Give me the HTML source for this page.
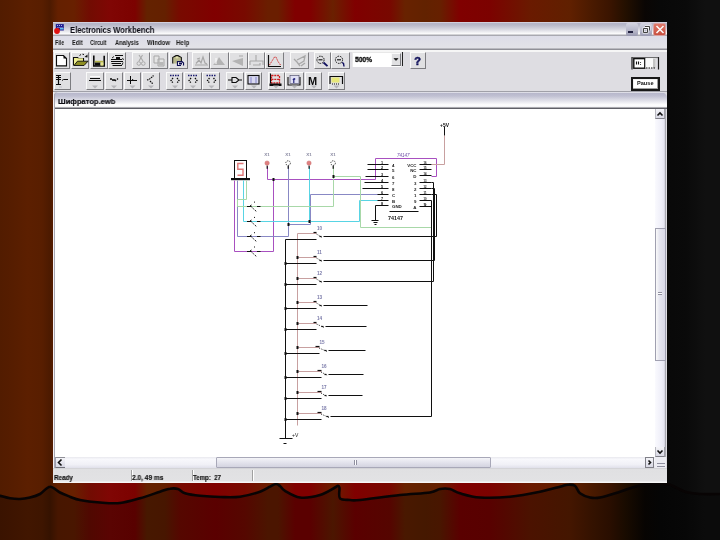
<!DOCTYPE html><html><head><meta charset="utf-8"><style>
*{margin:0;padding:0;box-sizing:border-box}
html,body{width:720px;height:540px;overflow:hidden}
body{position:relative;font-family:"Liberation Sans",sans-serif;background:linear-gradient(90deg,#521c00 0.00%, #561d00 1.67%, #5c1f00 3.89%, #581e00 5.83%, #4c1a00 6.94%, #642000 8.06%, #682000 10.28%, #720c02 12.50%, #800604 15.28%, #7c0200 18.75%, #642200 20.42%, #642000 22.92%, #780a00 25.00%, #800000 29.86%, #780a00 34.03%, #6a1e00 37.22%, #6a1e00 38.61%, #800000 40.97%, #800000 43.06%, #6a2000 46.25%, #800000 49.31%, #780800 54.17%, #682200 56.25%, #622200 59.03%, #662000 61.11%, #800000 63.89%, #7c0200 68.06%, #6a1a00 73.61%, #602000 79.17%, #4a1a00 82.22%, #3a1400 84.72%, #241000 86.81%, #0a0604 89.58%, #080808 91.67%, #0a0a0a 95.28%, #101010 97.92%, #101010 100.00%)}
.a{position:absolute}
.b{position:absolute;background:#e0e0e2;border-top:1px solid #fafafa;border-left:1px solid #fafafa;border-right:1px solid #7c7c80;border-bottom:1px solid #7c7c80}
.t{position:absolute;font-size:7px;line-height:7px;color:#111;white-space:nowrap;will-change:transform}
svg{position:absolute;left:0;top:0}

</style></head><body>
<svg width="720" height="540" viewBox="0 0 720 540">
<defs><linearGradient id="lg" x1="0" y1="0" x2="720" y2="0" gradientUnits="userSpaceOnUse">
<stop offset="0.0000" stop-color="#3a1300"/>
<stop offset="0.0167" stop-color="#3d1400"/>
<stop offset="0.0389" stop-color="#411600"/>
<stop offset="0.0583" stop-color="#3e1500"/>
<stop offset="0.0694" stop-color="#351200"/>
<stop offset="0.0806" stop-color="#471600"/>
<stop offset="0.1028" stop-color="#491600"/>
<stop offset="0.1250" stop-color="#500801"/>
<stop offset="0.1528" stop-color="#5a0402"/>
<stop offset="0.1875" stop-color="#580100"/>
<stop offset="0.2042" stop-color="#471800"/>
<stop offset="0.2292" stop-color="#471600"/>
<stop offset="0.2500" stop-color="#550700"/>
<stop offset="0.2986" stop-color="#5a0000"/>
<stop offset="0.3403" stop-color="#550700"/>
<stop offset="0.3722" stop-color="#4b1500"/>
<stop offset="0.3861" stop-color="#4b1500"/>
<stop offset="0.4097" stop-color="#5a0000"/>
<stop offset="0.4306" stop-color="#5a0000"/>
<stop offset="0.4625" stop-color="#4b1600"/>
<stop offset="0.4931" stop-color="#5a0000"/>
<stop offset="0.5417" stop-color="#550500"/>
<stop offset="0.5625" stop-color="#491800"/>
<stop offset="0.5903" stop-color="#451800"/>
<stop offset="0.6111" stop-color="#481600"/>
<stop offset="0.6389" stop-color="#5a0000"/>
<stop offset="0.6806" stop-color="#580100"/>
<stop offset="0.7361" stop-color="#4b1200"/>
<stop offset="0.7917" stop-color="#441600"/>
<stop offset="0.8222" stop-color="#341200"/>
<stop offset="0.8472" stop-color="#290e00"/>
<stop offset="0.8681" stop-color="#190b00"/>
<stop offset="0.8958" stop-color="#070402"/>
<stop offset="0.9167" stop-color="#050505"/>
<stop offset="0.9528" stop-color="#070707"/>
<stop offset="0.9792" stop-color="#0b0b0b"/>
<stop offset="1.0000" stop-color="#0b0b0b"/>
</linearGradient></defs>
<path d="M-5,495 C-4.2,495.1 -2.5,495.2 0,495.8 C2.5,496.4 6.7,497.8 10,498.3 C13.3,498.8 16.7,499.1 20,499 C23.3,498.9 26.7,498.3 30,497.5 C33.3,496.7 36.7,495.8 40,494 C43.3,492.2 46.7,486.9 50,486.7 C53.3,486.4 56.7,490.8 60,492.5 C63.3,494.2 66.7,495.4 70,496.7 C73.3,497.9 75.0,499.0 80,500 C85.0,501.0 93.3,502.0 100,502.5 C106.7,503.0 113.3,503.7 120,503 C126.7,502.3 133.3,500.2 140,498.3 C146.7,496.4 155.0,493.3 160,491.7 C165.0,490.1 167.0,489.1 170,488.7 C173.0,488.2 175.5,488.2 178,489 C180.5,489.8 181.3,492.2 185,493.3 C188.7,494.4 194.2,495.2 200,495.8 C205.8,496.4 213.3,496.9 220,497 C226.7,497.1 233.3,497.6 240,496.7 C246.7,495.8 255.0,493.4 260,491.7 C265.0,490.0 267.3,488.0 270,486.7 C272.7,485.4 274.3,484.1 276,484 C277.7,483.9 278.5,484.9 280,486 C281.5,487.1 281.7,488.9 285,490.8 C288.3,492.7 294.2,496.8 300,497.5 C305.8,498.2 314.2,496.7 320,495 C325.8,493.3 332.0,489.0 335,487.5 C338.0,486.0 337.2,485.7 338,485.8 C338.8,485.9 339.2,485.9 339.5,488 C339.8,490.1 338.2,496.3 340,498.3 C341.8,500.3 346.7,499.7 350,500 C353.3,500.3 351.7,500.8 360,500 C368.3,499.2 388.3,496.2 400,495 C411.7,493.8 423.3,493.5 430,492.5 C436.7,491.5 436.7,489.6 440,489 C443.3,488.4 446.7,488.3 450,489 C453.3,489.7 455.0,491.9 460,493.3 C465.0,494.7 471.7,496.9 480,497.5 C488.3,498.1 500.0,497.7 510,496.7 C520.0,495.7 531.7,493.4 540,491.7 C548.3,490.0 555.3,487.9 560,486.7 C564.7,485.5 565.5,484.8 568,484.7 C570.5,484.6 573.0,484.4 575,485.8 C577.0,487.2 577.5,491.4 580,493.3 C582.5,495.2 586.7,496.8 590,497.5 C593.3,498.2 595.0,498.5 600,497.5 C605.0,496.5 614.2,493.5 620,491.7 C625.8,489.9 630.3,487.9 635,486.7 C639.7,485.5 642.7,484.9 648,484.5 C653.3,484.1 662.3,483.5 667,484 C671.7,484.5 672.8,486.2 676,487.5 C679.2,488.8 682.0,490.9 686,492 C690.0,493.1 693.5,493.7 700,494 C706.5,494.3 720.8,494.0 725,494 L725,545 L-5,545 Z" fill="url(#lg)"/>
<path d="M-5,495 C-4.2,495.1 -2.5,495.2 0,495.8 C2.5,496.4 6.7,497.8 10,498.3 C13.3,498.8 16.7,499.1 20,499 C23.3,498.9 26.7,498.3 30,497.5 C33.3,496.7 36.7,495.8 40,494 C43.3,492.2 46.7,486.9 50,486.7 C53.3,486.4 56.7,490.8 60,492.5 C63.3,494.2 66.7,495.4 70,496.7 C73.3,497.9 75.0,499.0 80,500 C85.0,501.0 93.3,502.0 100,502.5 C106.7,503.0 113.3,503.7 120,503 C126.7,502.3 133.3,500.2 140,498.3 C146.7,496.4 155.0,493.3 160,491.7 C165.0,490.1 167.0,489.1 170,488.7 C173.0,488.2 175.5,488.2 178,489 C180.5,489.8 181.3,492.2 185,493.3 C188.7,494.4 194.2,495.2 200,495.8 C205.8,496.4 213.3,496.9 220,497 C226.7,497.1 233.3,497.6 240,496.7 C246.7,495.8 255.0,493.4 260,491.7 C265.0,490.0 267.3,488.0 270,486.7 C272.7,485.4 274.3,484.1 276,484 C277.7,483.9 278.5,484.9 280,486 C281.5,487.1 281.7,488.9 285,490.8 C288.3,492.7 294.2,496.8 300,497.5 C305.8,498.2 314.2,496.7 320,495 C325.8,493.3 332.0,489.0 335,487.5 C338.0,486.0 337.2,485.7 338,485.8 C338.8,485.9 339.2,485.9 339.5,488 C339.8,490.1 338.2,496.3 340,498.3 C341.8,500.3 346.7,499.7 350,500 C353.3,500.3 351.7,500.8 360,500 C368.3,499.2 388.3,496.2 400,495 C411.7,493.8 423.3,493.5 430,492.5 C436.7,491.5 436.7,489.6 440,489 C443.3,488.4 446.7,488.3 450,489 C453.3,489.7 455.0,491.9 460,493.3 C465.0,494.7 471.7,496.9 480,497.5 C488.3,498.1 500.0,497.7 510,496.7 C520.0,495.7 531.7,493.4 540,491.7 C548.3,490.0 555.3,487.9 560,486.7 C564.7,485.5 565.5,484.8 568,484.7 C570.5,484.6 573.0,484.4 575,485.8 C577.0,487.2 577.5,491.4 580,493.3 C582.5,495.2 586.7,496.8 590,497.5 C593.3,498.2 595.0,498.5 600,497.5 C605.0,496.5 614.2,493.5 620,491.7 C625.8,489.9 630.3,487.9 635,486.7 C639.7,485.5 642.7,484.9 648,484.5 C653.3,484.1 662.3,483.5 667,484 C671.7,484.5 672.8,486.2 676,487.5 C679.2,488.8 682.0,490.9 686,492 C690.0,493.1 693.5,493.7 700,494 C706.5,494.3 720.8,494.0 725,494" fill="none" stroke="#080404" stroke-width="2.6" stroke-linejoin="round"/>
</svg>
<div class="a" style="left:53px;top:22px;width:614px;height:461px;background:#dedde2"></div>
<div class="a" style="left:53px;top:22px;width:614px;height:14px;background:linear-gradient(180deg,#f0eaf0 0px,#b4b4c8 1px,#b8b8c8 3px,#d4d4de 7px,#f6f6f8 11px,#fcfcfc 12px,#a8a8b0 13px)"></div>
<div class="a" style="left:53px;top:36px;width:614px;height:14px;background:linear-gradient(180deg,#dcdce8,#e2e2e8 12px,#909098 13px)"></div>
<div class="a" style="left:53px;top:50px;width:614px;height:2px;background:#f6f6f6"></div>
<div class="a" style="left:53px;top:91px;width:614px;height:1px;background:#a0a0a8"></div>
<div class="a" style="left:54px;top:92px;width:613px;height:17px;border-radius:4px 6px 0 0;border-left:1px solid #a8a8b4;background:linear-gradient(180deg,#f0f0f4 0px,#b8b8cc 1.5px,#c0c0d2 4px,#dcdce6 8px,#ffffff 13px,#f4f4f6 15px,#606068 16px)"></div>
<div class="a" style="left:55px;top:109px;width:600px;height:348px;background:#fff"></div>
<div class="a" style="left:53px;top:92px;width:1px;height:377px;background:#f4f0f4"></div>
<div class="a" style="left:54px;top:94px;width:1px;height:375px;background:#a8a8b4"></div>
<div class="a" style="left:655px;top:109px;width:11px;height:348px;background:linear-gradient(90deg,#fafafe,#eeeef8 60%,#e4e4f0 85%,#a8a8b0 92%)"></div>
<div class="a" style="left:655px;top:109px;width:10px;height:10px;background:linear-gradient(180deg,#f4f4f8,#d8d8e4);border-left:1px solid #b8b8c0;border-bottom:1px solid #808088;border-right:1px solid #a0a0a8"></div>
<div class="a" style="left:655px;top:228px;width:11px;height:133px;background:linear-gradient(90deg,#fafafa,#e4e4ee 40%,#d8d8e6);border:1px solid #a0a0b0"></div>
<div class="a" style="left:658px;top:292px;width:4px;height:3px;background:#fff;border-top:1px solid #9090a0;border-bottom:1px solid #9090a0"></div>
<div class="a" style="left:655px;top:447px;width:10px;height:10px;background:linear-gradient(180deg,#f4f4f8,#d8d8e4);border-left:1px solid #b8b8c0;border-bottom:1px solid #808088;border-right:1px solid #a0a0a8"></div>
<div class="a" style="left:55px;top:457px;width:600px;height:11px;background:linear-gradient(180deg,#e8e8ee,#f8f8fc 20%,#f0f0f6 70%,#e0e0ea)"></div>
<div class="a" style="left:55px;top:457px;width:10px;height:11px;background:linear-gradient(180deg,#f4f4f8,#d8d8e4);border-left:1px solid #a0a0b0;border-bottom:1px solid #707078;border-top:1px solid #909098"></div>
<div class="a" style="left:216px;top:457px;width:275px;height:11px;background:linear-gradient(180deg,#f4f4f8,#e0e0ea 60%,#d4d4e0);border:1px solid #a8a8b8;border-radius:1px"></div>
<div class="a" style="left:354px;top:460px;width:3px;height:5px;background:#fff;border-left:1px solid #9090a0;border-right:1px solid #9090a0"></div>
<div class="a" style="left:645px;top:457px;width:9px;height:11px;background:linear-gradient(180deg,#f4f4f8,#d8d8e4);border:1px solid #808088"></div>
<div class="a" style="left:655px;top:457px;width:11px;height:11px;background:#ececf2"></div>
<svg width="720" height="540"><path d="M61.5,459.5 L58.5,462.5 L61.5,465.5" fill="none" stroke="#101010" stroke-width="1.6"/><path d="M648.5,460.5 L650.5,462.5 L648.5,464.5" fill="none" stroke="#101010" stroke-width="1.6"/><path d="M657.5,115.5 L660,113 L662.5,115.5" fill="none" stroke="#101010" stroke-width="1.6"/><path d="M657.5,450.5 L660,453 L662.5,450.5" fill="none" stroke="#101010" stroke-width="1.6"/><path d="M657,463.5 L665,463.5 M657,466.5 L665,466.5" stroke="#9090a0" stroke-width="1"/></svg>
<div class="a" style="left:53px;top:468px;width:614px;height:15px;background:linear-gradient(180deg,#c8c8cc 0px,#e0e0e2 1px,#e2e2e4 13px,#f6f6f6 14px)"></div>
<div class="a" style="left:131px;top:470px;width:2px;height:11px;background:linear-gradient(90deg,#a0a0a0 50%,#fff 50%)"></div>
<div class="a" style="left:192px;top:470px;width:2px;height:11px;background:linear-gradient(90deg,#a0a0a0 50%,#fff 50%)"></div>
<div class="a" style="left:252px;top:470px;width:2px;height:11px;background:linear-gradient(90deg,#a0a0a0 50%,#fff 50%)"></div>
<div class="t" style="left:53.5px;top:474px;font-size:7px;line-height:7px;font-weight:bold;color:#101010;transform:scaleX(0.904);transform-origin:0 0;-webkit-text-stroke:0.12px #000;">Ready</div>
<div class="t" style="left:132px;top:474px;font-size:7px;line-height:7px;font-weight:bold;color:#101010;transform:scaleX(0.941);transform-origin:0 0;-webkit-text-stroke:0.12px #000;">2.0, 49 ms</div>
<div class="t" style="left:193px;top:474px;font-size:7px;line-height:7px;font-weight:bold;color:#101010;transform:scaleX(0.871);transform-origin:0 0;-webkit-text-stroke:0.12px #000;">Temp:&nbsp; 27</div>
<div class="t" style="left:69.5px;top:25.5px;font-size:9.2px;line-height:9.2px;font-weight:bold;color:#101018;transform:scaleX(0.828);transform-origin:0 0;">Electronics Workbench</div>
<div class="t" style="left:54.900000000000006px;top:39px;font-size:7px;line-height:7px;font-weight:bold;color:#202020;transform:scaleX(0.755);transform-origin:0 0;">File</div>
<div class="t" style="left:72.2px;top:39px;font-size:7px;line-height:7px;font-weight:bold;color:#202020;transform:scaleX(0.802);transform-origin:0 0;">Edit</div>
<div class="t" style="left:90.3px;top:39px;font-size:7px;line-height:7px;font-weight:bold;color:#202020;transform:scaleX(0.742);transform-origin:0 0;">Circuit</div>
<div class="t" style="left:115.3px;top:39px;font-size:7px;line-height:7px;font-weight:bold;color:#202020;transform:scaleX(0.823);transform-origin:0 0;">Analysis</div>
<div class="t" style="left:146.6px;top:39px;font-size:7px;line-height:7px;font-weight:bold;color:#202020;transform:scaleX(0.863);transform-origin:0 0;">Window</div>
<div class="t" style="left:176.39999999999998px;top:39px;font-size:7px;line-height:7px;font-weight:bold;color:#202020;transform:scaleX(0.877);transform-origin:0 0;">Help</div>
<div class="t" style="left:57.8px;top:98.2px;font-size:7.6px;line-height:7.6px;font-weight:bold;color:#101018;transform:scaleX(0.993);transform-origin:0 0;-webkit-text-stroke:0.2px #000;">Шифратор.ewb</div>
<div class="b" style="left:54px;top:52px;width:16px;height:17px"></div>
<div class="b" style="left:71px;top:52px;width:18px;height:17px"></div>
<div class="b" style="left:90px;top:52px;width:18px;height:17px"></div>
<div class="b" style="left:108px;top:52px;width:18px;height:17px"></div>
<div class="b" style="left:132px;top:52px;width:18px;height:17px"></div>
<div class="b" style="left:150px;top:52px;width:18px;height:17px"></div>
<div class="b" style="left:169px;top:52px;width:19px;height:17px"></div>
<div class="b" style="left:192px;top:52px;width:18px;height:17px"></div>
<div class="b" style="left:210px;top:52px;width:19px;height:17px"></div>
<div class="b" style="left:229px;top:52px;width:19px;height:17px"></div>
<div class="b" style="left:248px;top:52px;width:17px;height:17px"></div>
<div class="b" style="left:265px;top:52px;width:19px;height:17px"></div>
<div class="b" style="left:290px;top:52px;width:19px;height:17px"></div>
<div class="b" style="left:314px;top:52px;width:17px;height:17px"></div>
<div class="b" style="left:331px;top:52px;width:19px;height:17px"></div>
<div class="b" style="left:410px;top:52px;width:16px;height:17px"></div>
<div class="b" style="left:54px;top:72px;width:17px;height:18px"></div>
<div class="b" style="left:86px;top:72px;width:18px;height:18px"></div>
<div class="b" style="left:105px;top:72px;width:18px;height:18px"></div>
<div class="b" style="left:124px;top:72px;width:17px;height:18px"></div>
<div class="b" style="left:142px;top:72px;width:18px;height:18px"></div>
<div class="b" style="left:166px;top:72px;width:17px;height:18px"></div>
<div class="b" style="left:184px;top:72px;width:18px;height:18px"></div>
<div class="b" style="left:202px;top:72px;width:18px;height:18px"></div>
<div class="b" style="left:226px;top:72px;width:18px;height:18px"></div>
<div class="b" style="left:245px;top:72px;width:17px;height:18px"></div>
<div class="b" style="left:268px;top:72px;width:17px;height:18px"></div>
<div class="b" style="left:285px;top:72px;width:19px;height:18px"></div>
<div class="b" style="left:305px;top:72px;width:17px;height:18px"></div>
<div class="b" style="left:328px;top:72px;width:17px;height:18px"></div>
<div class="a" style="left:352px;top:52px;width:49px;height:15px;background:#fff;border-top:1px solid #e8e8e8;border-left:1px solid #e8e8e8"></div>
<div class="b" style="left:391px;top:53px;width:10px;height:13px"></div>
<div class="a" style="left:402px;top:52px;width:1px;height:14px;background:#202020"></div>
<div class="t" style="left:354.5px;top:55.5px;font-size:7.5px;line-height:7.5px;font-weight:bold;color:#101010;transform:scaleX(0.886);transform-origin:0 0;-webkit-text-stroke:0.3px #000;">500%</div>
<svg width="720" height="540"><path d="M632,57 L632,69.5 M658.5,57 L658.5,69.5" stroke="#181818" stroke-width="1.2"/><path d="M632,57.6 L658.5,57.6" stroke="#404040" stroke-width="0.8"/><rect x="633.8" y="58.6" width="11" height="9.6" fill="#fff" stroke="#101010" stroke-width="1.4"/><rect x="645.5" y="58.2" width="10" height="10" fill="#fafafa"/><rect x="653" y="58.5" width="2.5" height="9.5" fill="#c4c4c4"/><path d="M646,68 L655,68" stroke="#101010" stroke-width="1.2" stroke-dasharray="1.5 1"/><path d="M636.5,61.5 L636.5,64.5 M638.5,61.5 L638.5,64.5 M640.5,62 L640.5,62.8 M640.5,64 L640.5,64.8" stroke="#101010" stroke-width="1.1"/></svg>
<div class="a" style="left:631px;top:77px;width:29px;height:14px;border:2px solid #181818;background:#fff;box-shadow:inset -1px -1px 0 #a0a0a0, inset 1px 1px 0 #f0f0f0"></div>
<div class="t" style="left:637px;top:81px;font-size:5.5px;line-height:5.5px;font-weight:bold;color:#101010;transform:scaleX(1.018);transform-origin:0 0;">Pause</div>
<div class="a" style="left:626px;top:23px;width:12px;height:12.5px;border-radius:2px;background:linear-gradient(180deg,#d4d4e0,#b0b0c4 70%,#9898b0)"></div>
<div class="a" style="left:628px;top:31px;width:5px;height:1.6px;background:#202040"></div>
<div class="a" style="left:640px;top:23px;width:11.6px;height:12.5px;border-radius:2px;background:linear-gradient(180deg,#d4d4e0,#b0b0c4 70%,#9898b0)"></div>
<svg width="720" height="540"><path d="M643.5,28.5 L647.5,28.5 L647.5,32.5 L643.5,32.5 Z M645,26.5 L649.5,26.5 L649.5,30.5" fill="none" stroke="#fff" stroke-width="1.8"/><path d="M643.5,28.5 L647.5,28.5 L647.5,32.5 L643.5,32.5 Z M645,26.5 L649.5,26.5 L649.5,30.5" fill="none" stroke="#101010" stroke-width="0.8"/></svg>
<div class="a" style="left:653px;top:23px;width:13px;height:12.5px;border-radius:2px;background:linear-gradient(180deg,#e07868,#c85040);border:1px solid #d8a0a0"></div>
<svg width="720" height="540"><path d="M656.5,26 L663.5,33 M663.5,26 L656.5,33" stroke="#fff" stroke-width="1.5"/></svg>
<svg width="720" height="540"><rect x="55.8" y="24.1" width="8" height="6.4" fill="#1c1c90"/><path d="M57,25.5 L63,25.5 M57.5,27.5 L62.5,27.5" stroke="#c0c0f0" stroke-width="0.9" stroke-dasharray="1 1"/><rect x="60" y="28" width="3.5" height="1.5" fill="#60c0f0"/><circle cx="57" cy="31" r="2.9" fill="#e01010"/></svg>
<svg width="720" height="540" viewBox="0 0 720 540"><rect x="234.5" y="160.5" width="12" height="18" fill="#fff" stroke="#101010" stroke-width="1"/><path d="M243.5,163.5 L237.8,163.5 L237.8,169.3 L243,169.3 L243,175.2 L237.5,175.2" fill="none" stroke="#e07878" stroke-width="1.4"/><rect x="231" y="178" width="19" height="2.2" fill="#101010"/><path d="M234.5,180.5 L234.5,251.5 L273.5,251.5 L273.5,179.5" fill="none" stroke="#a850c0" stroke-width="1"/><path d="M267.5,166.5 L267.5,179.5 L375.5,179.5 L375.5,158.5 L436.5,158.5 L436.5,176.5 L431.5,176.5" fill="none" stroke="#a850c0" stroke-width="1"/><path d="M237.5,180.5 L237.5,236.5 L288.5,236.5 L288.5,166.5" fill="none" stroke="#8888c4" stroke-width="1"/><path d="M288.5,224.5 L310.5,224.5 L310.5,194.5 L378.5,194.5" fill="none" stroke="#8888c4" stroke-width="1"/><path d="M243.5,180.5 L243.5,221.5 L359.5,221.5 L359.5,200.5 L378.5,200.5" fill="none" stroke="#58d4e4" stroke-width="1"/><path d="M309.5,166.5 L309.5,221.5" fill="none" stroke="#58d4e4" stroke-width="1"/><path d="M246.5,180.5 L246.5,199.5 L237.5,199.5 L237.5,206.5 L333.5,206.5 L333.5,166.5" fill="none" stroke="#a8d8a8" stroke-width="1"/><path d="M333.5,176.5 L360.5,176.5 L360.5,227.5 L431.5,227.5" fill="none" stroke="#a8d8a8" stroke-width="1"/><path d="M444.5,135.5 L444.5,164.5 L431.5,164.5" fill="none" stroke="#c8a0a0" stroke-width="1"/><path d="M297.5,233.5 L297.5,425.5" fill="none" stroke="#c8a0a0" stroke-width="1"/><rect x="272.5" y="178.0" width="2" height="3" fill="#101010"/><rect x="287.5" y="223.0" width="2" height="3" fill="#101010"/><rect x="308.5" y="220.0" width="2" height="3" fill="#101010"/><rect x="332.5" y="175.0" width="2" height="3" fill="#101010"/><path d="M247,206.5 L251.5,206.5 M257,206.5 L260.5,206.5" stroke="#101010" stroke-width="1.1" fill="none"/><path d="M250,206.0 L251.5,205.0" stroke="#101010" stroke-width="1"/><path d="M251.5,207.0 L257,212.0" stroke="#101010" stroke-width="1" fill="none" stroke-dasharray="1.4 1"/><rect x="254" y="201.6" width="1" height="1" fill="#101010"/><path d="M247,221.5 L251.5,221.5 M257,221.5 L260.5,221.5" stroke="#101010" stroke-width="1.1" fill="none"/><path d="M250,221.0 L251.5,220.0" stroke="#101010" stroke-width="1"/><path d="M251.5,222.0 L257,227.0" stroke="#101010" stroke-width="1" fill="none" stroke-dasharray="1.4 1"/><rect x="254" y="216.9" width="1" height="1" fill="#101010"/><path d="M247,236.5 L251.5,236.5 M257,236.5 L260.5,236.5" stroke="#101010" stroke-width="1.1" fill="none"/><path d="M250,236.0 L251.5,235.0" stroke="#101010" stroke-width="1"/><path d="M251.5,237.0 L257,242.0" stroke="#101010" stroke-width="1" fill="none" stroke-dasharray="1.4 1"/><rect x="254" y="232.2" width="1" height="1" fill="#101010"/><path d="M247,251.5 L251.5,251.5 M257,251.5 L260.5,251.5" stroke="#101010" stroke-width="1.1" fill="none"/><path d="M250,251.0 L251.5,250.0" stroke="#101010" stroke-width="1"/><path d="M251.5,252.0 L257,257.0" stroke="#101010" stroke-width="1" fill="none" stroke-dasharray="1.4 1"/><rect x="254" y="246.5" width="1" height="1" fill="#101010"/><circle cx="267.1" cy="163.1" r="2.2" fill="#e08080" stroke="#c87070" stroke-width="0.5"/><rect x="266.6" y="165.6" width="1.2" height="3.2" fill="#101010"/><text x="264.3" y="156" font-size="4" font-weight="bold" fill="#8888a0" font-family="Liberation Sans" textLength="5.5" lengthAdjust="spacingAndGlyphs">X1</text><circle cx="288.1" cy="163.1" r="2.3" fill="#fff" stroke="#101010" stroke-width="0.8" stroke-dasharray="1.2 1"/><rect x="287.6" y="165.6" width="1.2" height="3.2" fill="#101010"/><text x="285.3" y="156" font-size="4" font-weight="bold" fill="#8888a0" font-family="Liberation Sans" textLength="5.5" lengthAdjust="spacingAndGlyphs">X1</text><circle cx="309" cy="163.1" r="2.2" fill="#e08080" stroke="#c87070" stroke-width="0.5"/><rect x="308.5" y="165.6" width="1.2" height="3.2" fill="#101010"/><text x="306.2" y="156" font-size="4" font-weight="bold" fill="#8888a0" font-family="Liberation Sans" textLength="5.5" lengthAdjust="spacingAndGlyphs">X1</text><circle cx="333.1" cy="163.1" r="2.3" fill="#fff" stroke="#101010" stroke-width="0.8" stroke-dasharray="1.2 1"/><rect x="332.6" y="165.6" width="1.2" height="3.2" fill="#101010"/><text x="330.3" y="156" font-size="4" font-weight="bold" fill="#8888a0" font-family="Liberation Sans" textLength="5.5" lengthAdjust="spacingAndGlyphs">X1</text><path d="M285.5,239.5 L285.5,438.5" fill="none" stroke="#101010" stroke-width="1"/><path d="M279.5,438.5 L292.5,438.5" fill="none" stroke="#101010" stroke-width="1"/><path d="M283.5,443.5 L286.5,443.5" fill="none" stroke="#101010" stroke-width="1"/><text x="292" y="437" font-size="5" fill="#202020" font-family="Liberation Sans">+V</text><path d="M297.5,233.5 L316.5,233.5" fill="none" stroke="#c8a0a0" stroke-width="1"/><path d="M313.5,232.5 L316.5,232.5" fill="none" stroke="#101010" stroke-width="1.2"/><path d="M285.5,239.5 L316.5,239.5" fill="none" stroke="#101010" stroke-width="1"/><path d="M316.5,234.0 L322.2,237.5" stroke="#202020" stroke-width="0.9" stroke-dasharray="1.2 1.3" fill="none"/><path d="M319.5,236.5 L321.5,236.5" fill="none" stroke="#101010" stroke-width="1.2"/><path d="M323.5,236.5 L436.5,236.5" fill="none" stroke="#101010" stroke-width="1"/><text x="317.0" y="230.0" font-size="4.6" font-weight="bold" fill="#7878a8" font-family="Liberation Sans">10</text><path d="M297.5,257.5 L316.5,257.5" fill="none" stroke="#c8a0a0" stroke-width="1"/><path d="M313.5,256.5 L316.5,256.5" fill="none" stroke="#101010" stroke-width="1.2"/><path d="M285.5,263.5 L316.5,263.5" fill="none" stroke="#101010" stroke-width="1"/><path d="M316.5,258.0 L322.2,261.5" stroke="#202020" stroke-width="0.9" stroke-dasharray="1.2 1.3" fill="none"/><path d="M319.5,260.5 L321.5,260.5" fill="none" stroke="#101010" stroke-width="1.2"/><path d="M323.5,260.5 L434.5,260.5" fill="none" stroke="#101010" stroke-width="1"/><rect x="284.5" y="262.0" width="2" height="3" fill="#101010"/><rect x="296.5" y="256.0" width="2" height="3" fill="#101010"/><text x="317.0" y="254.0" font-size="4.6" font-weight="bold" fill="#7878a8" font-family="Liberation Sans">11</text><path d="M297.5,278.5 L316.5,278.5" fill="none" stroke="#c8a0a0" stroke-width="1"/><path d="M313.5,277.5 L316.5,277.5" fill="none" stroke="#101010" stroke-width="1.2"/><path d="M285.5,284.5 L316.5,284.5" fill="none" stroke="#101010" stroke-width="1"/><path d="M316.5,279.0 L322.2,282.5" stroke="#202020" stroke-width="0.9" stroke-dasharray="1.2 1.3" fill="none"/><path d="M319.5,281.5 L321.5,281.5" fill="none" stroke="#101010" stroke-width="1.2"/><path d="M323.5,281.5 L433.5,281.5" fill="none" stroke="#101010" stroke-width="1"/><rect x="284.5" y="283.0" width="2" height="3" fill="#101010"/><rect x="296.5" y="277.0" width="2" height="3" fill="#101010"/><text x="317.0" y="274.9" font-size="4.6" font-weight="bold" fill="#7878a8" font-family="Liberation Sans">12</text><path d="M297.5,302.5 L316.5,302.5" fill="none" stroke="#c8a0a0" stroke-width="1"/><path d="M313.5,301.5 L316.5,301.5" fill="none" stroke="#101010" stroke-width="1.2"/><path d="M285.5,308.5 L316.5,308.5" fill="none" stroke="#101010" stroke-width="1"/><path d="M316.5,303.0 L322.3,306.5" stroke="#202020" stroke-width="0.9" stroke-dasharray="1.2 1.3" fill="none"/><path d="M319.5,305.5 L321.5,305.5" fill="none" stroke="#101010" stroke-width="1.2"/><path d="M323.5,305.5 L367.5,305.5" fill="none" stroke="#101010" stroke-width="1"/><rect x="284.5" y="307.0" width="2" height="3" fill="#101010"/><rect x="296.5" y="301.0" width="2" height="3" fill="#101010"/><text x="317.0" y="298.9" font-size="4.6" font-weight="bold" fill="#7878a8" font-family="Liberation Sans">13</text><path d="M297.5,323.5 L316.5,323.5" fill="none" stroke="#c8a0a0" stroke-width="1"/><path d="M313.5,322.5 L316.5,322.5" fill="none" stroke="#101010" stroke-width="1.2"/><path d="M285.5,329.5 L316.5,329.5" fill="none" stroke="#101010" stroke-width="1"/><path d="M316.5,324.0 L324,327.5" stroke="#202020" stroke-width="0.9" stroke-dasharray="1.2 1.3" fill="none"/><path d="M321.5,326.5 L323.5,326.5" fill="none" stroke="#101010" stroke-width="1.2"/><path d="M325.5,326.5 L366.5,326.5" fill="none" stroke="#101010" stroke-width="1"/><rect x="284.5" y="328.0" width="2" height="3" fill="#101010"/><rect x="296.5" y="322.0" width="2" height="3" fill="#101010"/><text x="317.0" y="320.0" font-size="4.6" font-weight="bold" fill="#7878a8" font-family="Liberation Sans">14</text><path d="M297.5,347.5 L319.5,347.5" fill="none" stroke="#c8a0a0" stroke-width="1"/><path d="M315.5,346.5 L319.5,346.5" fill="none" stroke="#101010" stroke-width="1.2"/><path d="M285.5,353.5 L319.5,353.5" fill="none" stroke="#101010" stroke-width="1"/><path d="M319,348.0 L327.3,351.5" stroke="#202020" stroke-width="0.9" stroke-dasharray="1.2 1.3" fill="none"/><path d="M324.5,350.5 L326.5,350.5" fill="none" stroke="#101010" stroke-width="1.2"/><path d="M328.5,350.5 L365.5,350.5" fill="none" stroke="#101010" stroke-width="1"/><rect x="284.5" y="352.0" width="2" height="3" fill="#101010"/><rect x="296.5" y="346.0" width="2" height="3" fill="#101010"/><text x="319.5" y="344.2" font-size="4.6" font-weight="bold" fill="#7878a8" font-family="Liberation Sans">15</text><path d="M297.5,371.5 L321.5,371.5" fill="none" stroke="#c8a0a0" stroke-width="1"/><path d="M317.5,370.5 L321.5,370.5" fill="none" stroke="#101010" stroke-width="1.2"/><path d="M285.5,377.5 L321.5,377.5" fill="none" stroke="#101010" stroke-width="1"/><path d="M321,372.0 L327.75,375.5" stroke="#202020" stroke-width="0.9" stroke-dasharray="1.2 1.3" fill="none"/><path d="M324.5,374.5 L326.5,374.5" fill="none" stroke="#101010" stroke-width="1.2"/><path d="M328.5,374.5 L363.5,374.5" fill="none" stroke="#101010" stroke-width="1"/><rect x="284.5" y="376.0" width="2" height="3" fill="#101010"/><rect x="296.5" y="370.0" width="2" height="3" fill="#101010"/><text x="321.5" y="367.95" font-size="4.6" font-weight="bold" fill="#7878a8" font-family="Liberation Sans">16</text><path d="M297.5,392.5 L321.5,392.5" fill="none" stroke="#c8a0a0" stroke-width="1"/><path d="M317.5,391.5 L321.5,391.5" fill="none" stroke="#101010" stroke-width="1.2"/><path d="M285.5,398.5 L321.5,398.5" fill="none" stroke="#101010" stroke-width="1"/><path d="M321,393.0 L327,396.5" stroke="#202020" stroke-width="0.9" stroke-dasharray="1.2 1.3" fill="none"/><path d="M324.5,395.5 L326.5,395.5" fill="none" stroke="#101010" stroke-width="1.2"/><path d="M328.5,395.5 L362.5,395.5" fill="none" stroke="#101010" stroke-width="1"/><rect x="284.5" y="397.0" width="2" height="3" fill="#101010"/><rect x="296.5" y="391.0" width="2" height="3" fill="#101010"/><text x="321.5" y="388.7" font-size="4.6" font-weight="bold" fill="#7878a8" font-family="Liberation Sans">17</text><path d="M297.5,413.5 L321.5,413.5" fill="none" stroke="#c8a0a0" stroke-width="1"/><path d="M317.5,412.5 L321.5,412.5" fill="none" stroke="#101010" stroke-width="1.2"/><path d="M285.5,419.5 L321.5,419.5" fill="none" stroke="#101010" stroke-width="1"/><path d="M321,414.0 L329,417.5" stroke="#202020" stroke-width="0.9" stroke-dasharray="1.2 1.3" fill="none"/><path d="M326.5,416.5 L328.5,416.5" fill="none" stroke="#101010" stroke-width="1.2"/><path d="M330.5,416.5 L431.5,416.5" fill="none" stroke="#101010" stroke-width="1"/><rect x="284.5" y="418.0" width="2" height="3" fill="#101010"/><rect x="296.5" y="412.0" width="2" height="3" fill="#101010"/><text x="321.5" y="409.95" font-size="4.6" font-weight="bold" fill="#7878a8" font-family="Liberation Sans">18</text><path d="M431.5,182.5 L433.5,182.5 L433.5,281.5" fill="none" stroke="#101010" stroke-width="1"/><path d="M431.5,188.5 L434.5,188.5 L434.5,260.5" fill="none" stroke="#101010" stroke-width="1"/><path d="M431.5,194.5 L436.5,194.5 L436.5,236.5" fill="none" stroke="#101010" stroke-width="1"/><path d="M431.5,200.5 L431.5,200.5 L431.5,416.5" fill="none" stroke="#101010" stroke-width="1"/><path d="M430.5,206.5 L431.5,206.5" fill="none" stroke="#101010" stroke-width="1"/><path d="M367.5,164.5 L388.5,164.5" fill="none" stroke="#101010" stroke-width="1"/><text x="381" y="163.7" font-size="3.8" font-weight="bold" fill="#101010" font-family="Liberation Sans">1</text><text x="392" y="166.5" font-size="4.4" font-weight="bold" fill="#202020" font-family="Liberation Sans">4</text><path d="M367.5,169.5 L388.5,169.5" fill="none" stroke="#101010" stroke-width="1"/><text x="381" y="168.7" font-size="3.8" font-weight="bold" fill="#101010" font-family="Liberation Sans">2</text><text x="392" y="171.5" font-size="4.4" font-weight="bold" fill="#202020" font-family="Liberation Sans">5</text><path d="M365.5,176.5 L388.5,176.5" fill="none" stroke="#101010" stroke-width="1"/><text x="381" y="175.7" font-size="3.8" font-weight="bold" fill="#101010" font-family="Liberation Sans">3</text><text x="392" y="178.5" font-size="4.4" font-weight="bold" fill="#202020" font-family="Liberation Sans">6</text><path d="M364.5,182.5 L388.5,182.5" fill="none" stroke="#101010" stroke-width="1"/><text x="381" y="181.7" font-size="3.8" font-weight="bold" fill="#101010" font-family="Liberation Sans">4</text><text x="392" y="184.5" font-size="4.4" font-weight="bold" fill="#202020" font-family="Liberation Sans">7</text><path d="M362.5,188.5 L388.5,188.5" fill="none" stroke="#101010" stroke-width="1"/><text x="381" y="187.7" font-size="3.8" font-weight="bold" fill="#101010" font-family="Liberation Sans">5</text><text x="392" y="190.5" font-size="4.4" font-weight="bold" fill="#202020" font-family="Liberation Sans">8</text><path d="M377.5,194.5 L388.5,194.5" fill="none" stroke="#101010" stroke-width="1"/><text x="381" y="193.7" font-size="3.8" font-weight="bold" fill="#101010" font-family="Liberation Sans">6</text><text x="392" y="196.5" font-size="4.4" font-weight="bold" fill="#202020" font-family="Liberation Sans">C</text><path d="M377.5,200.5 L388.5,200.5" fill="none" stroke="#101010" stroke-width="1"/><text x="381" y="199.7" font-size="3.8" font-weight="bold" fill="#101010" font-family="Liberation Sans">7</text><text x="392" y="202.5" font-size="4.4" font-weight="bold" fill="#202020" font-family="Liberation Sans">B</text><path d="M375.5,205.5 L388.5,205.5" fill="none" stroke="#101010" stroke-width="1"/><text x="381" y="204.7" font-size="3.8" font-weight="bold" fill="#101010" font-family="Liberation Sans">8</text><text x="392" y="207.5" font-size="4.4" font-weight="bold" fill="#202020" font-family="Liberation Sans">GND</text><path d="M419.5,164.5 L431.5,164.5" fill="none" stroke="#101010" stroke-width="1"/><text x="423.5" y="163.7" font-size="3.6" font-weight="bold" fill="#101010" font-family="Liberation Sans" textLength="3" lengthAdjust="spacingAndGlyphs">16</text><text x="416.5" y="166.5" font-size="4.4" font-weight="bold" fill="#202020" font-family="Liberation Sans" text-anchor="end">VCC</text><path d="M419.5,169.5 L431.5,169.5" fill="none" stroke="#101010" stroke-width="1"/><text x="423.5" y="168.7" font-size="3.6" font-weight="bold" fill="#101010" font-family="Liberation Sans" textLength="3" lengthAdjust="spacingAndGlyphs">15</text><text x="416.5" y="171.5" font-size="4.4" font-weight="bold" fill="#202020" font-family="Liberation Sans" text-anchor="end">NC</text><path d="M419.5,175.5 L431.5,175.5" fill="none" stroke="#101010" stroke-width="1"/><text x="423.5" y="174.7" font-size="3.6" font-weight="bold" fill="#101010" font-family="Liberation Sans" textLength="3" lengthAdjust="spacingAndGlyphs">14</text><text x="416.5" y="177.5" font-size="4.4" font-weight="bold" fill="#202020" font-family="Liberation Sans" text-anchor="end">D</text><path d="M419.5,182.5 L431.5,182.5" fill="none" stroke="#101010" stroke-width="1"/><text x="423.5" y="181.7" font-size="3.6" font-weight="bold" fill="#101010" font-family="Liberation Sans" textLength="3" lengthAdjust="spacingAndGlyphs">13</text><text x="416.5" y="184.5" font-size="4.4" font-weight="bold" fill="#202020" font-family="Liberation Sans" text-anchor="end">3</text><path d="M419.5,188.5 L431.5,188.5" fill="none" stroke="#101010" stroke-width="1"/><text x="423.5" y="187.7" font-size="3.6" font-weight="bold" fill="#101010" font-family="Liberation Sans" textLength="3" lengthAdjust="spacingAndGlyphs">12</text><text x="416.5" y="190.5" font-size="4.4" font-weight="bold" fill="#202020" font-family="Liberation Sans" text-anchor="end">2</text><path d="M419.5,194.5 L431.5,194.5" fill="none" stroke="#101010" stroke-width="1"/><text x="423.5" y="193.7" font-size="3.6" font-weight="bold" fill="#101010" font-family="Liberation Sans" textLength="3" lengthAdjust="spacingAndGlyphs">11</text><text x="416.5" y="196.5" font-size="4.4" font-weight="bold" fill="#202020" font-family="Liberation Sans" text-anchor="end">1</text><path d="M419.5,200.5 L431.5,200.5" fill="none" stroke="#101010" stroke-width="1"/><text x="423.5" y="199.7" font-size="3.6" font-weight="bold" fill="#101010" font-family="Liberation Sans" textLength="3" lengthAdjust="spacingAndGlyphs">10</text><text x="416.5" y="202.5" font-size="4.4" font-weight="bold" fill="#202020" font-family="Liberation Sans" text-anchor="end">9</text><path d="M419.5,206.5 L431.5,206.5" fill="none" stroke="#101010" stroke-width="1"/><text x="423.5" y="205.7" font-size="3.6" font-weight="bold" fill="#101010" font-family="Liberation Sans" textLength="3" lengthAdjust="spacingAndGlyphs">9</text><text x="416.5" y="208.5" font-size="4.4" font-weight="bold" fill="#202020" font-family="Liberation Sans" text-anchor="end">A</text><path d="M389.5,211.5 L418.5,211.5" fill="none" stroke="#101010" stroke-width="1"/><text x="388" y="219.5" font-size="5.6" fill="#202020" font-family="Liberation Sans" font-weight="bold" textLength="15" lengthAdjust="spacingAndGlyphs">74147</text><text x="397" y="156.5" font-size="4.5" fill="#7050a8" font-family="Liberation Sans" font-style="italic">74147</text><path d="M375.5,205.5 L375.5,220.5" fill="none" stroke="#101010" stroke-width="1"/><path d="M371.5,220.5 L378.5,220.5" fill="none" stroke="#101010" stroke-width="1"/><path d="M373.5,222.5 L377.5,222.5" fill="none" stroke="#101010" stroke-width="1"/><path d="M374.5,224.5 L376.5,224.5" fill="none" stroke="#101010" stroke-width="1"/><text x="440" y="127" font-size="5" font-weight="bold" fill="#101010" font-family="Liberation Sans" textLength="9" lengthAdjust="spacingAndGlyphs">+5V</text><path d="M444.5,126.5 L444.5,135.5" fill="none" stroke="#101010" stroke-width="1"/><path d="M56.5,55.5 L63.5,55.5 L66.5,58.5 L66.5,65.9 L56.5,65.9 Z" fill="#fff" stroke="#0c0c0c" stroke-width="1.1"/><path d="M63.5,55.5 L63.5,58.5 L66.5,58.5 Z" fill="#0c0c0c"/><path d="M73.5,65.5 L73.5,57.5 L77.5,57.5 L78.5,58.5 L83.5,58.5 L83.5,61" fill="#eeee90" stroke="#0c0c0c" stroke-width="1.1"/><rect x="74.2" y="58.3" width="8.8" height="6.8" fill="#eeee90"/><path d="M74,65.5 L77.5,61.2 L88,61.2 L84,65.5 Z" fill="#8e8e22" stroke="#0c0c0c" stroke-width="0.9"/><path d="M79.5,55.5 L81,54.5 M82.5,54.2 L84,54.5" fill="none" stroke="#0c0c0c" stroke-width="1"/><path d="M84.5,57 L87.5,54.5 L87.5,57.5 Z" fill="#0c0c0c"/><path d="M93.8,55.5 L93.8,66 L104.2,66 L104.2,55.8" fill="none" stroke="#0c0c0c" stroke-width="1.6"/><rect x="94.8" y="60.8" width="8.6" height="1.8" fill="#b4b446"/><rect x="95" y="62.6" width="5.5" height="3" fill="#0c0c0c"/><rect x="100.5" y="62.6" width="3" height="3" fill="#e6e68a"/><path d="M115,55.5 L123,55.5 M111,59.5 L122,59.5 M111,61.5 L123,61.5 M111.5,63.5 L121,63.5 M112.5,65.5 L122,65.5" stroke="#0c0c0c" stroke-width="1"/><rect x="116" y="57" width="4" height="2" fill="#0c0c0c"/><path d="M112,58 L114,56.5 M122.5,58 L123.5,60 M123,62.5 L122,65" stroke="#0c0c0c" stroke-width="0.9"/><path d="M139,55 L143,61 M142.5,55 L139,61" stroke="#a8a8a8" stroke-width="1.1"/><circle cx="138.8" cy="63.5" r="1.8" fill="none" stroke="#a8a8a8"/><circle cx="143.3" cy="63.5" r="1.8" fill="none" stroke="#a8a8a8"/><path d="M154,56 L159,56 L159,63 L154,63 Z M158,59 L164,59 L164,66 L158,66 Z" fill="#e4e4e4" stroke="#a8a8a8"/><rect x="158.5" y="62" width="5" height="3.5" fill="#b8b8b8"/><path d="M172.8,63.5 L172.8,57.5 L174.5,56.5 L176,55.7 L178,55.7 L179.5,56.5 L181.3,57.5 L181.3,61" fill="#b8b88c" stroke="#0c0c0c" stroke-width="1.2"/><rect x="173.5" y="57.5" width="7" height="6" fill="#b8b88c"/><ellipse cx="177" cy="57.5" rx="1.5" ry="1" fill="#e0e0b0"/><path d="M177.5,61.5 L182,61.5 L183.5,63 L183.5,65.5 M177.5,61 L177.5,65.5 L181,65.5" fill="#fff" stroke="#0c0c50" stroke-width="1.2"/><rect x="179" y="62.5" width="3" height="2" fill="#0c0c50"/><path d="M195,65 L208,65 M196,63.5 L199,60 L201,63 L203,57 L205,63 L207,64 M200,58 L197,59" fill="none" stroke="#a8a8a8" stroke-width="1.2"/><path d="M213,65 L225,65 L221,60 L219,57 L217,61 Z" fill="#a8a8a8" opacity="0.8"/><path d="M216,58 L216,64" stroke="#fff"/><path d="M232,61 L243,58 L243,66 Z" fill="#a8a8a8" opacity="0.8"/><path d="M239,56 L243,56" stroke="#a8a8a8"/><path d="M256,55 L256,61 M250,61 L263,61 L263,65 M250,61 L250,65 M253,65 L260,65 L260,63" fill="none" stroke="#a8a8a8" stroke-width="1.1"/><path d="M268.5,55 L268.5,66.5 L281,66.5" fill="none" stroke="#0c0c0c" stroke-width="1.2"/><path d="M269.5,65 L272,61 L274.5,57 L276,57 L278,61.5 L280.5,65" fill="none" stroke="#d02828" stroke-width="1" stroke-dasharray="1.3 0.8"/><path d="M294,59 L297,62 L300,66 M297,60 L305,56 L304,61 L299,64 M301,66 L305,63" fill="none" stroke="#a8a8a8" stroke-width="1.3"/><circle cx="320.5" cy="59.8" r="3.6" fill="none" stroke="#0c0c0c" stroke-width="1" stroke-dasharray="1.6 0.9"/><path d="M318.5,59.8 L322.5,59.8" stroke="#0c0c0c" stroke-width="1.1"/><circle cx="339" cy="59.8" r="3.6" fill="none" stroke="#0c0c0c" stroke-width="1" stroke-dasharray="1.6 0.9"/><path d="M337,59.8 L341,59.8" stroke="#0c0c0c" stroke-width="1.1"/><path d="M323.5,62.5 L327.5,66.2" stroke="#101060" stroke-width="1.8"/><path d="M342,62.5 L343.5,63.5 L344,66.5" fill="none" stroke="#101060" stroke-width="1.4"/><text x="414.3" y="65" font-size="11" font-weight="bold" fill="#10105a" stroke="#10105a" stroke-width="0.5" font-family="Liberation Sans">?</text><path d="M394,58.5 L398,58.5 L396,60.5 Z" fill="#0c0c0c" stroke="#0c0c0c" stroke-width="0.6"/><path d="M56,75.5 L61,75.5 M56,77.5 L61,77.5 M56,79.5 L61,79.5 M56,84.5 L61,84.5" stroke="#0c0c0c" stroke-width="1"/><path d="M58.5,75 L58.5,85" stroke="#0c0c0c" stroke-width="1.2"/><path d="M62,80.5 L63.5,79.5 L68,79.5" stroke="#0c0c0c" stroke-width="1" fill="none"/><path d="M59,87 L62,87" stroke="#c0c0c8"/><path d="M90,78.5 L100,78.5 M89,80.5 L101,80.5" stroke="#0c0c0c" stroke-width="1"/><path d="M90,76.5 L100,76.5" stroke="#fafafa" stroke-width="1"/><path d="M110,79 L112,79 M112,80 L115,80 L116,81 M117,79.5 L118,78.5" stroke="#0c0c0c" stroke-width="1.3"/><path d="M127,80.5 L137,80.5 M130.5,76 L130.5,84" stroke="#0c0c0c" stroke-width="1"/><path d="M132,80.5 L133,79" stroke="#0c0c0c"/><path d="M147,80 L149,79.5 L152,77 L153.5,75.5 M150,81 L152,83 L153,84" stroke="#0c0c0c" stroke-width="1.2" fill="none" stroke-dasharray="1.5 0.8"/><path d="M170,75.5 L180,75.5" stroke="#1a1a70" stroke-width="1.6" stroke-dasharray="1.5 1"/><path d="M173,78 L171,80.5 L173,83 M177,78 L179,80.5 L177,83" stroke="#0c0c0c" stroke-width="1.3" fill="none" stroke-dasharray="1.4 0.9"/><path d="M188,75.5 L198,75.5" stroke="#1a1a70" stroke-width="1.6" stroke-dasharray="1.5 1"/><path d="M191,78 L189,80.5 L191,83 M195,78 L197,80.5 L195,83" stroke="#0c0c0c" stroke-width="1.3" fill="none" stroke-dasharray="1.4 0.9"/><path d="M206.5,75.5 L216.5,75.5" stroke="#1a1a70" stroke-width="1.6" stroke-dasharray="1.5 1"/><path d="M209.5,78 L207.5,80.5 L209.5,83 M213.5,78 L215.5,80.5 L213.5,83" stroke="#0c0c0c" stroke-width="1.3" fill="none" stroke-dasharray="1.4 0.9"/><path d="M228,80 L232,80 M232,77.5 L236,77.5 L239,80 L236,82.5 L232,82.5 Z M239,80 L242,80" stroke="#0c0c0c" stroke-width="1.1" fill="none"/><rect x="248" y="75.5" width="11" height="8.5" fill="#d8d8f0" stroke="#0c0c0c" stroke-width="1.1"/><path d="M251,77.5 L251,82.5 M256,77.5 L256,82.5" stroke="#3030a0" stroke-dasharray="1 1"/><path d="M271.5,75.5 L279.5,75.5 L279.5,83 L271.5,83 Z M271.5,79.3 L279.5,79.3" fill="none" stroke="#d02020" stroke-width="1.3" stroke-dasharray="2 0.8"/><rect x="269.5" y="83.5" width="12" height="2.5" fill="#0c0c0c"/><rect x="270" y="73.5" width="1" height="10" fill="#0c0c0c"/><path d="M288,77 L288,85 L300,85 L300,77" fill="none" stroke="#0c0c0c" stroke-width="1.1"/><rect x="290" y="75.5" width="9" height="8" fill="#e0e0f4" stroke="#404060" stroke-width="0.6"/><text x="292.5" y="83" font-size="8" font-weight="bold" fill="#101070" font-family="Liberation Sans">f</text><text x="308" y="85" font-size="11" font-weight="bold" fill="#0c0c0c" font-family="Liberation Sans">M</text><path d="M330,76 L330,84 M342.5,76 L342.5,84 M330,76.5 L342.5,76.5" stroke="#0c0c0c" stroke-width="1.2" fill="none"/><rect x="331.5" y="77.5" width="8" height="5" fill="#e8e878"/><path d="M332,84 L340,84" stroke="#0c0c0c" stroke-dasharray="1 1"/><path d="M92,85.5 L98,85.5 L95,88.5 Z" fill="#b4b4b8"/><path d="M111,85.5 L117,85.5 L114,88.5 Z" fill="#b4b4b8"/><path d="M129.5,85.5 L135.5,85.5 L132.5,88.5 Z" fill="#b4b4b8"/><path d="M148,85.5 L154,85.5 L151,88.5 Z" fill="#b4b4b8"/><path d="M172,85.5 L178,85.5 L175,88.5 Z" fill="#b4b4b8"/><path d="M190,85.5 L196,85.5 L193,88.5 Z" fill="#b4b4b8"/><path d="M208.5,85.5 L214.5,85.5 L211.5,88.5 Z" fill="#b4b4b8"/><path d="M232,85.5 L238,85.5 L235,88.5 Z" fill="#b4b4b8"/><path d="M251,85.5 L257,85.5 L254,88.5 Z" fill="#b4b4b8"/><path d="M273,85.5 L279,85.5 L276,88.5 Z" fill="#b4b4b8"/><path d="M291.5,85.5 L297.5,85.5 L294.5,88.5 Z" fill="#b4b4b8"/><path d="M311,85.5 L317,85.5 L314,88.5 Z" fill="#b4b4b8"/><path d="M333.5,85.5 L339.5,85.5 L336.5,88.5 Z" fill="#b4b4b8"/></svg>
</body></html>
